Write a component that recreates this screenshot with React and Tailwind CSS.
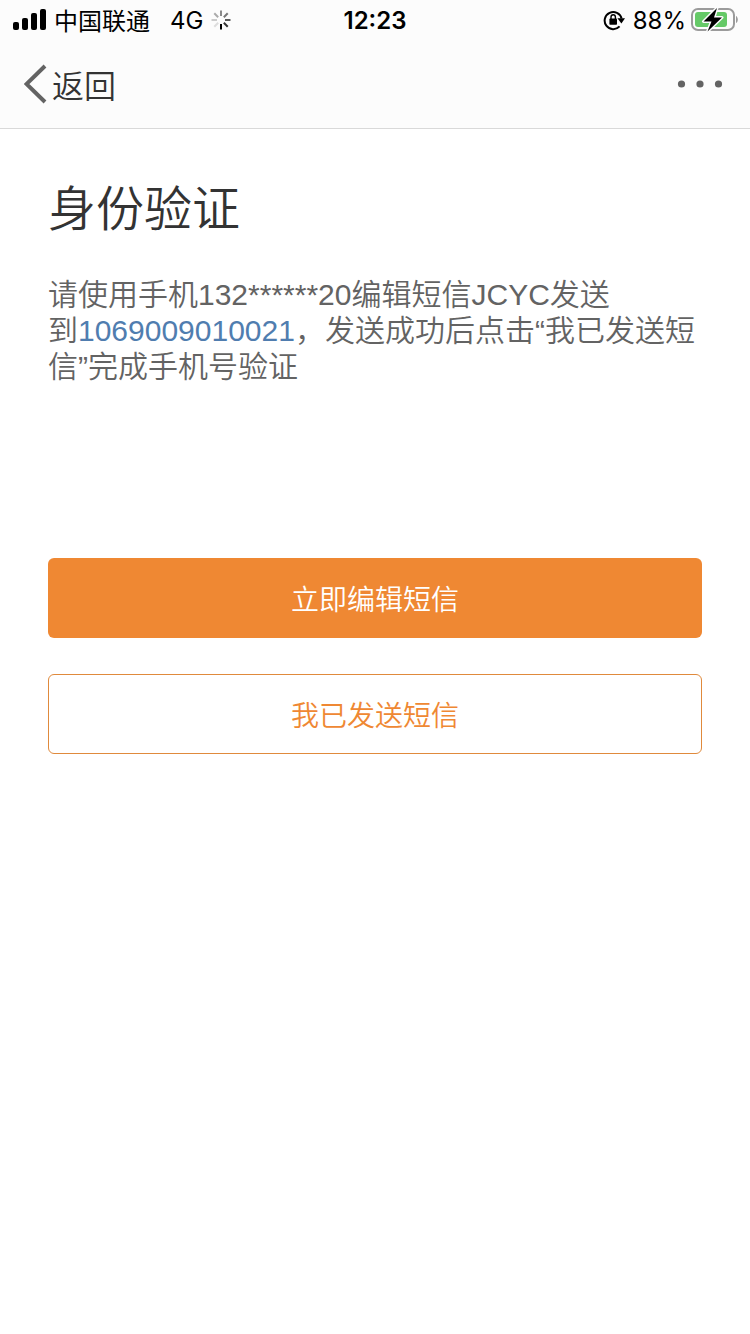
import { useState } from 'react';

const SignalIcon = () => (
    <svg width="34" height="22" viewBox="0 0 34 22" fill="black" aria-hidden="true">
        <rect x="1" y="13" width="6" height="8" rx="2" />
        <rect x="10" y="9" width="6" height="12" rx="2" />
        <rect x="19" y="4" width="6" height="17" rx="2" />
        <rect x="28" y="0" width="6" height="21" rx="2" />
    </svg>
);

const spokes = ['#8a8a8a', '#777777', '#5a5a5a', '#333333', '#000000', '#dddddd', '#cccccc', '#aaaaaa'];

const SpinnerIcon = () => (
    <svg width="20" height="20" viewBox="-10 -10 20 20" strokeWidth="2" aria-hidden="true">
        {spokes.map((color, i) => (
            <line key={i} x1="0" y1="-4" x2="0" y2="-9.5" stroke={color} transform={`rotate(${i * 45})`} />
        ))}
    </svg>
);

const RotationLockIcon = () => (
    <svg width="22" height="22" viewBox="0 0 22 22" fill="none" aria-hidden="true">
        <path d="M16.6 17.4A8.6 8.6 0 1 1 18.6 9.5" stroke="black" strokeWidth="2" />
        <path d="M14.4 9.3h7.6L18.4 14.4z" fill="black" />
        <rect x="6.4" y="9.6" width="7.6" height="6.2" rx="0.8" fill="black" />
        <path d="M8 10V8a2.2 2.2 0 0 1 4.4 0v2" stroke="black" strokeWidth="1.4" />
    </svg>
);

const BatteryIcon = () => (
    <svg width="48" height="26" viewBox="0 0 48 26" aria-hidden="true">
        <rect x="2" y="2" width="42" height="21" rx="6" fill="none" stroke="#9b9b9b" strokeWidth="2" />
        <path d="M46 9c2.4 1 2.4 6 0 7z" fill="#9b9b9b" />
        <rect x="5" y="5" width="32" height="15" rx="3" fill="#65c967" />
        <path
            d="M27 1 13.5 14.5h8L17.5 24.5 32 10.5h-8z"
            fill="black"
            stroke="#fcfcfc"
            strokeWidth="3"
            strokeLinejoin="round"
            paintOrder="stroke"
        />
    </svg>
);

const StatusBar = () => (
    <div className="grid h-10 grid-cols-3 items-center px-3 text-2xl text-black">
        <div className="flex items-center whitespace-nowrap">
            <SignalIcon />
            <span className="ml-2">中国联通</span>
            <span className="ml-5 pt-0.5 font-[Inter,sans-serif]">4G</span>
            <span className="ml-2"><SpinnerIcon /></span>
        </div>
        <div className="pt-0.5 text-center font-[Inter,sans-serif] font-semibold">12:23</div>
        <div className="flex items-center justify-end font-[Inter,sans-serif]">
            <RotationLockIcon />
            <span className="ml-2 mr-1 pt-0.5">88%</span>
            <BatteryIcon />
        </div>
    </div>
);

const NavBar = () => (
    <nav className="flex h-22 items-center justify-between px-6 text-[#333333]">
        <button type="button" className="flex items-center gap-1 text-[32px] font-[350]">
            <svg width="24" height="40" viewBox="0 0 24 40" fill="none" aria-hidden="true">
                <path d="M21 2 2.5 20 21 38" stroke="#636363" strokeWidth="4" />
            </svg>
            返回
        </button>
        <button type="button" aria-label="更多">
            <svg width="50" height="8" viewBox="0 0 50 8" fill="#636363" aria-hidden="true">
                <circle cx="5.5" cy="4" r="3.6" />
                <circle cx="24" cy="4" r="3.6" />
                <circle cx="42.5" cy="4" r="3.6" />
            </svg>
        </button>
    </nav>
);

const App = () => {
    const [sent, setSent] = useState(false);
    const smsLink = 'sms:1069009010021';

    const handleEdit = () => {
        window.location.href = smsLink;
    };

    return (
        <div className="min-h-screen bg-white font-['Noto_Sans_CJK_SC',sans-serif]">
            <header className="border-b border-[#d9d9d9] bg-[#fcfcfc]">
                <StatusBar />
                <NavBar />
            </header>

            <main className="px-12 pt-12">
                <h1 className="text-5xl leading-14 font-[350] text-[#333333]">身份验证</h1>
                {/* the word joiner keeps the number on the same line as the word before it */}
                <p className="mt-11 font-['Liberation_Sans','Noto_Sans_CJK_SC',sans-serif] text-[30px] leading-9 font-[350] text-[#636363]">
                    请使用手机132******20编辑短信JCYC发送到&#8288;<a href={smsLink} className="text-[#507daf]">1069009010021</a>，发送成功后点击“我已发送短信”完成手机号验证
                </p>

                <div className="mt-[173px] flex flex-col gap-9 text-[28px] font-[350]">
                    <button
                        type="button"
                        onClick={handleEdit}
                        className="h-20 rounded-md bg-[#ef8833] text-white"
                    >
                        立即编辑短信
                    </button>
                    <button
                        type="button"
                        disabled={sent}
                        onClick={() => setSent(true)}
                        className="h-20 rounded-md border border-[#e08a3c] text-[#ef8833]"
                    >
                        我已发送短信
                    </button>
                </div>
            </main>
        </div>
    );
};

export default App;
